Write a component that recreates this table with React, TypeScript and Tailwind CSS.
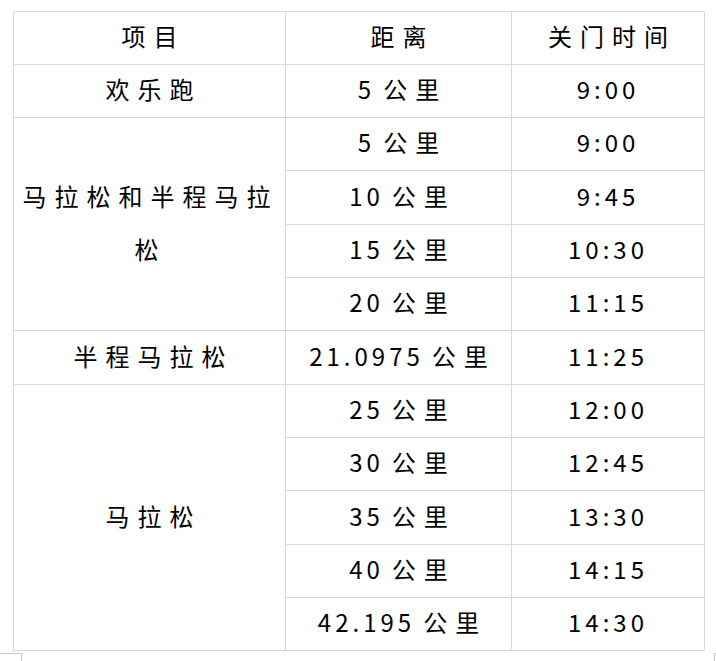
const rows: { dist: string; time: string }[] = [
  { dist: '5', time: '9:00' },
  { dist: '5', time: '9:00' },
  { dist: '10', time: '9:45' },
  { dist: '15', time: '10:30' },
  { dist: '20', time: '11:15' },
  { dist: '21.0975', time: '11:25' },
  { dist: '25', time: '12:00' },
  { dist: '30', time: '12:45' },
  { dist: '35', time: '13:30' },
  { dist: '40', time: '14:15' },
  { dist: '42.195', time: '14:30' },
];

function Han({ children }: { children: string }) {
  return <span className="tracking-[8px] mr-[-8px] whitespace-nowrap">{children}</span>;
}

function Num({ children }: { children: string }) {
  return <span className="tracking-[4px]">{children}</span>;
}

function Dist({ value }: { value: string }) {
  return (
    <span className="whitespace-nowrap">
      <Num>{value}</Num>
      <span className="ml-[8px]">
        <Han>公里</Han>
      </span>
    </span>
  );
}

const cell = 'border border-[#d9d9d9] text-center align-middle p-0 pb-[4px]';

export default function App() {
  const groups: { label: React.ReactNode; span: number; start: number }[] = [
    { label: <Han>欢乐跑</Han>, span: 1, start: 0 },
    {
      label: (
        <span className="inline-block whitespace-nowrap leading-[53px] mr-[6px]">
          <Han>马拉松和半程马拉</Han>
          <br />
          <Han>松</Han>
        </span>
      ),
      span: 4,
      start: 1,
    },
    { label: <Han>半程马拉松</Han>, span: 1, start: 5 },
    { label: <Han>马拉松</Han>, span: 5, start: 6 },
  ];

  return (
    <div className="relative h-[661px] w-[716px] overflow-hidden bg-white font-['Noto_Sans_CJK_SC',sans-serif] text-[24px] text-black">
      <div className="pl-[13px] pt-[11px]">
        <table className="w-[692px] table-fixed border-collapse">
          <colgroup>
            <col className="w-[272px]" />
            <col className="w-[226px]" />
            <col className="w-[193px]" />
          </colgroup>
          <tbody>
            <tr className="h-[53px]">
              <td className={cell}>
                <Han>项目</Han>
              </td>
              <td className={cell}>
                <Han>距离</Han>
              </td>
              <td className={cell}>
                <Han>关门时间</Han>
              </td>
            </tr>
            {rows.map((r, i) => {
              const g = groups.find((x) => x.start === i);
              const last = i === rows.length - 1;
              return (
                <tr key={i} className={i % 3 === 2 ? 'h-[54px]' : 'h-[53px]'}>
                  {g && (
                    <td className={cell} rowSpan={g.span}>
                      {g.label}
                    </td>
                  )}
                  <td className={`${cell} ${last ? 'border-t-[#c8c8c8]' : ''}`} style={last ? { borderTopStyle: 'dashed' } : undefined}>
                    <Dist value={r.dist} />
                  </td>
                  <td className={`${cell} ${last ? 'border-t-[#c8c8c8]' : ''}`} style={last ? { borderTopStyle: 'dashed' } : undefined}>
                    <Num>{r.time}</Num>
                  </td>
                </tr>
              );
            })}
          </tbody>
        </table>
      </div>
      <div className="absolute left-0 top-[653px] h-[8px] w-[22px] border-r border-t border-[#c8c8c8]" />
      <div className="absolute left-[714px] top-[653px] h-[8px] w-[2px] border-l border-t border-[#c8c8c8]" />
    </div>
  );
}
